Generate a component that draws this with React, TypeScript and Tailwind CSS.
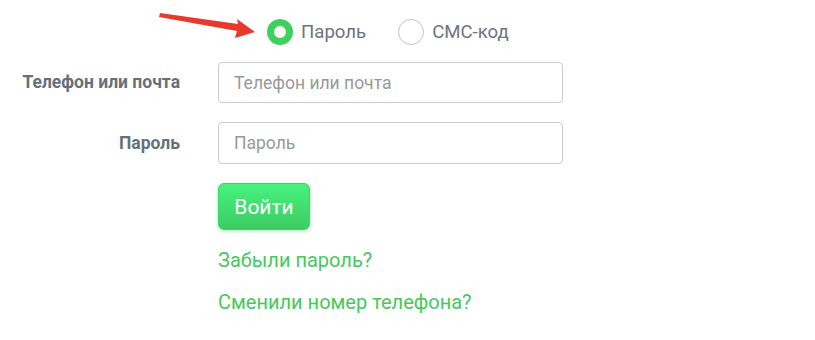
import { useState } from 'react'

export default function App() {
    const [mode, setMode] = useState<'password' | 'sms'>('password')

    return (
        <div className="relative w-[815px] h-[340px] bg-white font-['Roboto',sans-serif] text-[#606b75]">
            {/* Red pointer arrow */}
            <svg className="absolute left-[158px] top-[8px]" width="100" height="32" viewBox="0 0 100 32">
                <path d="M2 5 L80 16 L79 11 L97 24 L77 30 L79 23 L1 9 Z" fill="#e53a2c" />
            </svg>

            {/* Login mode */}
            <div className="flex items-center pl-[267px] pt-[19px] h-[45px]">
                <button className="flex items-center gap-2" onClick={() => setMode('password')}>
                    <span
                        className={
                            mode === 'password'
                                ? 'w-[26px] h-[26px] rounded-full border-[7px] border-[#3fd160] bg-white'
                                : 'w-[26px] h-[26px] rounded-full border border-[#c4c4c4] bg-white'
                        }
                    />
                    <span className="text-[18.6px] leading-none text-[#6b7580]">Пароль</span>
                </button>
                <button className="flex items-center gap-2 ml-[32px]" onClick={() => setMode('sms')}>
                    <span
                        className={
                            mode === 'sms'
                                ? 'w-[26px] h-[26px] rounded-full border-[7px] border-[#3fd160] bg-white'
                                : 'w-[26px] h-[26px] rounded-full border border-[#c4c4c4] bg-white'
                        }
                    />
                    <span className="text-[18.6px] leading-none text-[#6b7580]">СМС-код</span>
                </button>
            </div>

            {/* Form */}
            <div className="flex flex-col gap-[19px] mt-[17px]">
                <div className="flex items-center">
                    <label className="w-[181px] pr-[1px] text-right text-[17.5px] font-bold text-[#66707a]">
                        Телефон или почта
                    </label>
                    <input
                        className="ml-[37px] w-[345px] h-[41px] rounded-[4px] border border-[#cccccc] px-[15px] text-[17.5px] text-[#333] placeholder:text-[#999999] outline-none"
                        placeholder="Телефон или почта"
                    />
                </div>
                <div className="flex items-center">
                    <label className="w-[181px] pr-[1px] text-right text-[17.5px] font-bold text-[#66707a]">
                        Пароль
                    </label>
                    <input
                        type="password"
                        className="ml-[37px] w-[345px] h-[42px] rounded-[4px] border border-[#cccccc] px-[15px] text-[17.5px] text-[#333] placeholder:text-[#999999] outline-none"
                        placeholder="Пароль"
                    />
                </div>
            </div>

            <div className="flex flex-col items-start pl-[218px] mt-[19px]">
                <button className="w-[92px] h-[47px] pt-[2px] rounded-[6px] bg-gradient-to-b from-[#47f27d] to-[#3dcc62] border border-[#3ed466] text-white text-[21px] font-normal shadow-[0_1px_4px_rgba(60,200,100,0.45)]">
                    Войти
                </button>
                <a className="mt-[16px] text-[20px] leading-[28px] text-[#46c85c]" href="#">
                    Забыли пароль?
                </a>
                <a className="mt-[14px] text-[20px] leading-[28px] text-[#46c85c]" href="#">
                    Сменили номер телефона?
                </a>
            </div>
        </div>
    )
}
